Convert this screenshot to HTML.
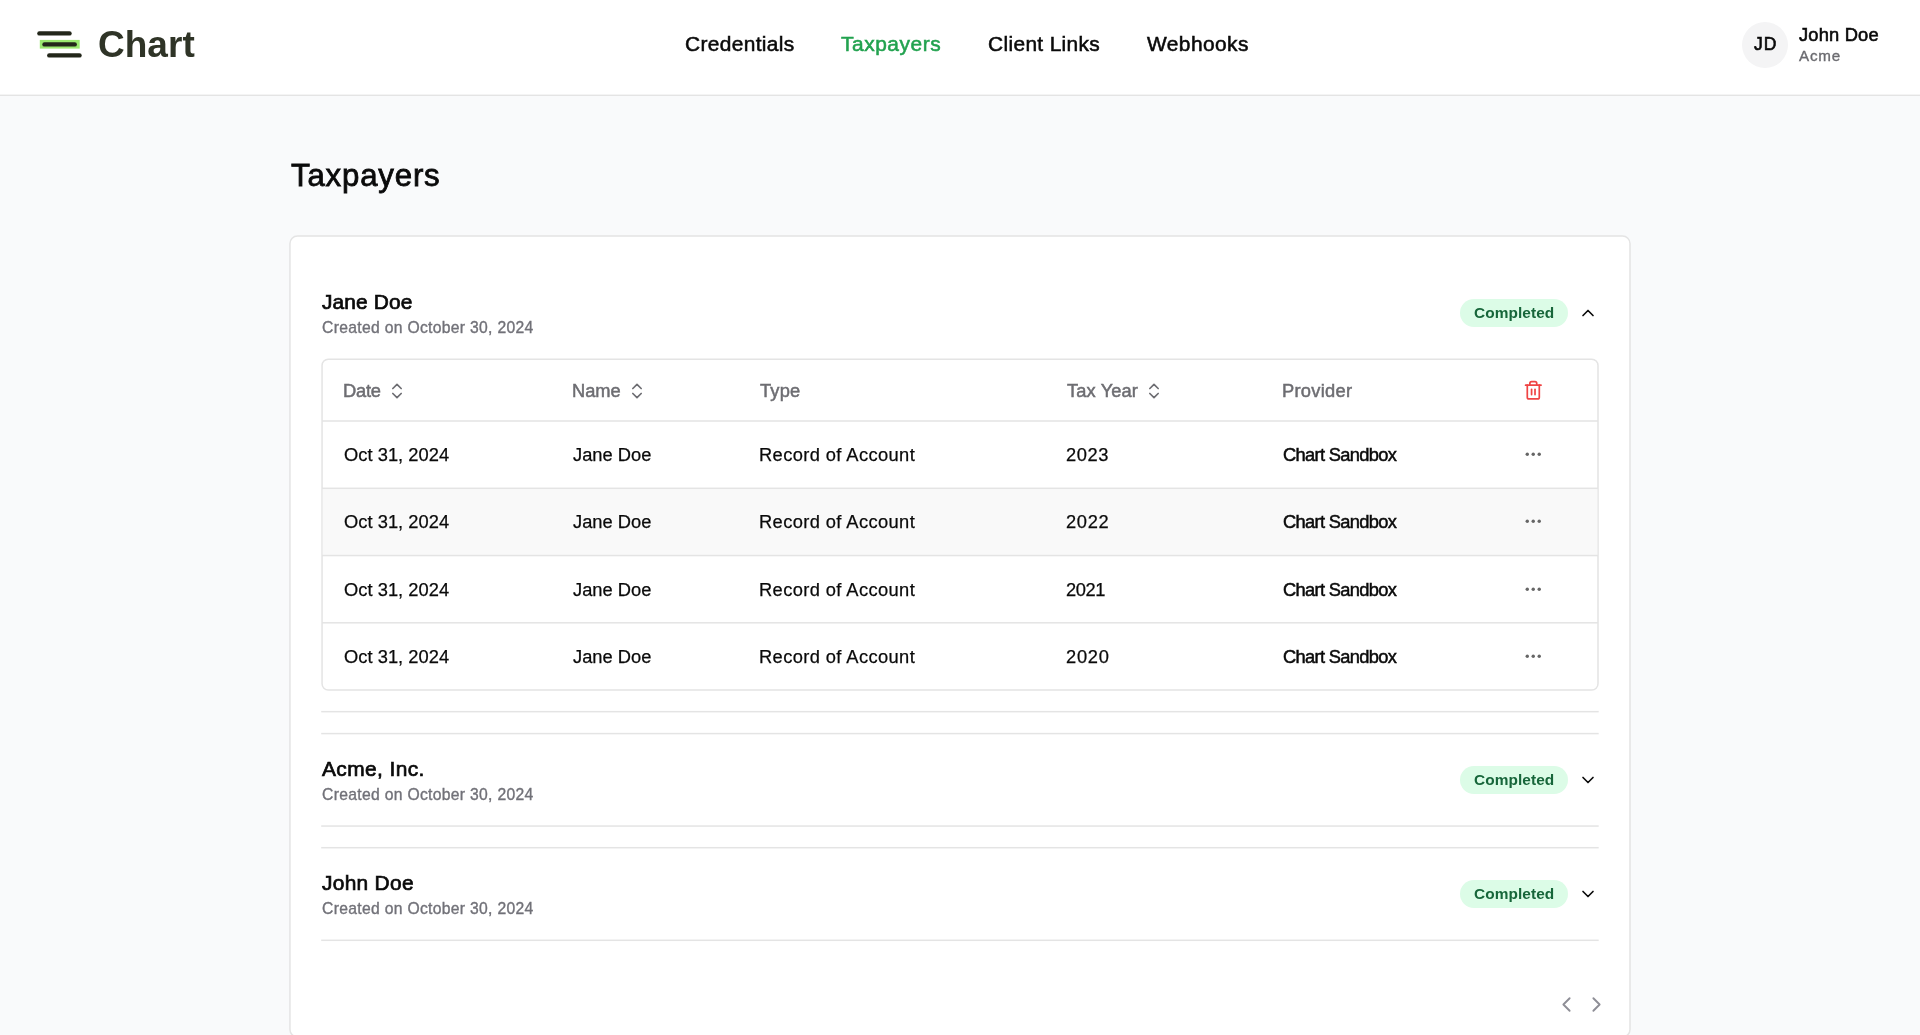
<!DOCTYPE html>
<html lang="en">
<head>
<meta charset="utf-8">
<title>Taxpayers</title>
<style>
*{box-sizing:border-box;margin:0;padding:0}
html,body{width:1920px;height:1035px;overflow:hidden}
body{font-family:"Liberation Sans",sans-serif;background:#f9fafb;color:#0a0a0a;position:relative}
.app{position:absolute;left:0;top:0;width:1920px;height:1035px}
.t{position:absolute;white-space:nowrap;line-height:normal;will-change:transform;font-weight:400;color:#0a0a0a}
header{position:absolute;left:0;top:0;width:1920px;height:96px;background:#fff}
.brand{font-weight:700;color:#2f3427}
.nav{text-decoration:none;-webkit-text-stroke:.55px currentColor}
.nav.on{color:#22a24f}
.avatar{position:absolute;left:1741.8px;top:21.5px;width:46px;height:46px;border-radius:50%;background:#f4f4f5}
.jd,.uname{-webkit-text-stroke:.6px currentColor}
.h1{-webkit-text-stroke:.8px currentColor}
.uorg{color:#6b6b70;-webkit-text-stroke:.35px currentColor}
.name{-webkit-text-stroke:.7px currentColor}
.sub{color:#717178;-webkit-text-stroke:.35px currentColor}
.badge{position:absolute;left:1459.8px;width:108.5px;height:28px;border-radius:14px;background:#dcfce7}
.badge-t{font-weight:700;color:#17663a}
.td{-webkit-text-stroke:.25px currentColor}
.th{color:#6d6d72;-webkit-text-stroke:.5px currentColor}
.prov{-webkit-text-stroke:.5px currentColor}
svg{position:absolute;overflow:visible}
.ic{fill:none;stroke-width:2;stroke-linecap:round;stroke-linejoin:round}
</style>
</head>
<body>
<div class="app">
<header>
 <svg width="100" height="96" viewBox="0 0 100 96" style="left:0;top:0"><rect x="39.8" y="39.9" width="39.9" height="8.7" fill="#9be870"/><rect x="37.2" y="31.2" width="34.5" height="4.4" rx="2.2" fill="#23271a"/><rect x="42.3" y="42.2" width="34.6" height="4.4" rx="2.2" fill="#23271a"/><rect x="47.1" y="53.2" width="34.6" height="4.4" rx="2.2" fill="#23271a"/></svg>
 <div class="t brand" style="left:97.60px;top:24px;font-size:37.0px;letter-spacing:0.026px">Chart</div>
 <nav>
  <a class="t nav" style="left:685.07px;top:32px;font-size:20.9px;letter-spacing:0.363px">Credentials</a>
  <a class="t nav on" style="left:841.38px;top:32px;font-size:20.9px;letter-spacing:0.548px">Taxpayers</a>
  <a class="t nav" style="left:987.77px;top:32px;font-size:20.9px;letter-spacing:0.347px">Client Links</a>
  <a class="t nav" style="left:1146.53px;top:32px;font-size:20.9px;letter-spacing:0.446px">Webhooks</a>
 </nav>
 <div class="avatar"></div>
 <div class="t jd" style="left:1754.20px;top:34px;font-size:17.5px;letter-spacing:0.950px">JD</div>
 <div class="t uname" style="left:1799.10px;top:24px;font-size:18.3px;letter-spacing:0.187px">John Doe</div>
 <div class="t uorg" style="left:1798.97px;top:47px;font-size:15.2px;letter-spacing:0.758px">Acme</div>
</header>
<h1 class="t h1" style="left:290.90px;top:158px;font-size:31.2px;letter-spacing:0.819px">Taxpayers</h1>
<svg class="lines" width="1920" height="1035" viewBox="0 0 1920 1035" style="left:0;top:0">
<rect x="0" y="94.6" width="1920" height="1.4" fill="#e4e4e4"/>
<rect x="289.95" y="236.0" width="1340.05" height="801" rx="7.5" fill="#fff" stroke="#e4e4e4" stroke-width="1.5"/>
<rect x="322.05" y="359.25" width="1275.95" height="330.85" rx="6.25" fill="#fff" stroke="#e4e4e4" stroke-width="1.5"/>
<rect x="322.7" y="488.9" width="1274.65" height="66.1" fill="#f9f9f9"/>
<rect x="322.05" y="420.250" width="1275.95" height="1.5" fill="#e4e4e4"/>
<rect x="322.05" y="487.550" width="1275.95" height="1.5" fill="#e4e4e4"/>
<rect x="322.05" y="554.800" width="1275.95" height="1.5" fill="#e4e4e4"/>
<rect x="322.05" y="622.050" width="1275.95" height="1.5" fill="#e4e4e4"/>
<rect x="321.2" y="710.900" width="1277.50" height="1.5" fill="#e4e4e4"/>
<rect x="321.2" y="732.850" width="1277.50" height="1.5" fill="#e4e4e4"/>
<rect x="321.2" y="825.300" width="1277.50" height="1.5" fill="#e4e4e4"/>
<rect x="321.2" y="846.950" width="1277.50" height="1.5" fill="#e4e4e4"/>
<rect x="321.2" y="939.550" width="1277.50" height="1.5" fill="#e4e4e4"/>
</svg>
<!-- taxpayer 1 -->
<div class="t name" style="left:322.25px;top:290px;font-size:20.9px;letter-spacing:0.120px">Jane Doe</div>
<div class="t sub" style="left:322.07px;top:319px;font-size:15.7px;letter-spacing:0.309px">Created on October 30, 2024</div>
<div class="badge" style="top:298.70px"></div>
<div class="t badge-t" style="left:1474.20px;top:304px;font-size:15.4px;letter-spacing:0.085px">Completed</div>
<svg class="ic" style="left:1578.45px;top:303.30px" width="20" height="20" viewBox="0 0 24 24" stroke="#0a0a0a"><path d="m18 15-6-6-6 6"/></svg>
<div class="t th" style="left:343.21px;top:380px;font-size:18.3px;letter-spacing:-0.219px">Date</div>
<div class="t th" style="left:572.05px;top:380px;font-size:18.3px;letter-spacing:0.001px">Name</div>
<div class="t th" style="left:760.25px;top:380px;font-size:18.3px;letter-spacing:0.211px">Type</div>
<div class="t th" style="left:1066.55px;top:380px;font-size:18.3px;letter-spacing:0.118px">Tax Year</div>
<div class="t th" style="left:1282.25px;top:380px;font-size:18.3px;letter-spacing:0.288px">Provider</div>
<svg class="ic" style="left:387.10px;top:380.70px" width="20" height="20" viewBox="0 0 24 24" stroke="#6d6d72"><path d="m7 15 5 5 5-5"/><path d="m7 9 5-5 5 5"/></svg>
<svg class="ic" style="left:626.70px;top:380.70px" width="20" height="20" viewBox="0 0 24 24" stroke="#6d6d72"><path d="m7 15 5 5 5-5"/><path d="m7 9 5-5 5 5"/></svg>
<svg class="ic" style="left:1143.90px;top:380.70px" width="20" height="20" viewBox="0 0 24 24" stroke="#6d6d72"><path d="m7 15 5 5 5-5"/><path d="m7 9 5-5 5 5"/></svg>
<svg class="ic" style="left:1523.1px;top:380.1px" width="20.6" height="20.6" viewBox="0 0 24 24" stroke="#ef4444"><path d="M3 6h18"/><path d="M19 6v14c0 1-1 2-2 2H7c-1 0-2-1-2-2V6"/><path d="M8 6V4c0-1 1-2 2-2h4c1 0 2 1 2 2v2"/><path d="M10 11v6"/><path d="M14 11v6"/></svg>
<div class="t td" style="left:343.73px;top:444px;font-size:18.3px;letter-spacing:0.040px">Oct 31, 2024</div>
<div class="t td" style="left:572.62px;top:444px;font-size:18.3px;letter-spacing:0.008px">Jane Doe</div>
<div class="t td" style="left:759.02px;top:444px;font-size:18.3px;letter-spacing:0.396px">Record of Account</div>
<div class="t td" style="left:1066.33px;top:444px;font-size:18.3px;letter-spacing:0.550px">2023</div>
<div class="t td prov" style="left:1283.15px;top:444px;font-size:18.3px;letter-spacing:-0.676px">Chart Sandbox</div>
<svg style="left:1523.30px;top:444.05px" width="20.5" height="20.5" viewBox="0 0 24 24" fill="#666"><circle cx="5" cy="12" r="2"/><circle cx="12" cy="12" r="2"/><circle cx="19" cy="12" r="2"/></svg>
<div class="t td" style="left:343.73px;top:511px;font-size:18.3px;letter-spacing:0.040px">Oct 31, 2024</div>
<div class="t td" style="left:572.62px;top:511px;font-size:18.3px;letter-spacing:0.008px">Jane Doe</div>
<div class="t td" style="left:759.02px;top:511px;font-size:18.3px;letter-spacing:0.396px">Record of Account</div>
<div class="t td" style="left:1066.33px;top:511px;font-size:18.3px;letter-spacing:0.650px">2022</div>
<div class="t td prov" style="left:1283.15px;top:511px;font-size:18.3px;letter-spacing:-0.676px">Chart Sandbox</div>
<svg style="left:1523.30px;top:511.30px" width="20.5" height="20.5" viewBox="0 0 24 24" fill="#666"><circle cx="5" cy="12" r="2"/><circle cx="12" cy="12" r="2"/><circle cx="19" cy="12" r="2"/></svg>
<div class="t td" style="left:343.73px;top:579px;font-size:18.3px;letter-spacing:0.040px">Oct 31, 2024</div>
<div class="t td" style="left:572.62px;top:579px;font-size:18.3px;letter-spacing:0.008px">Jane Doe</div>
<div class="t td" style="left:759.02px;top:579px;font-size:18.3px;letter-spacing:0.396px">Record of Account</div>
<div class="t td" style="left:1066.33px;top:579px;font-size:18.3px;letter-spacing:-0.384px">2021</div>
<div class="t td prov" style="left:1283.15px;top:579px;font-size:18.3px;letter-spacing:-0.676px">Chart Sandbox</div>
<svg style="left:1523.30px;top:578.60px" width="20.5" height="20.5" viewBox="0 0 24 24" fill="#666"><circle cx="5" cy="12" r="2"/><circle cx="12" cy="12" r="2"/><circle cx="19" cy="12" r="2"/></svg>
<div class="t td" style="left:343.73px;top:646px;font-size:18.3px;letter-spacing:0.040px">Oct 31, 2024</div>
<div class="t td" style="left:572.62px;top:646px;font-size:18.3px;letter-spacing:0.008px">Jane Doe</div>
<div class="t td" style="left:759.02px;top:646px;font-size:18.3px;letter-spacing:0.396px">Record of Account</div>
<div class="t td" style="left:1066.33px;top:646px;font-size:18.3px;letter-spacing:0.750px">2020</div>
<div class="t td prov" style="left:1283.15px;top:646px;font-size:18.3px;letter-spacing:-0.676px">Chart Sandbox</div>
<svg style="left:1523.30px;top:645.85px" width="20.5" height="20.5" viewBox="0 0 24 24" fill="#666"><circle cx="5" cy="12" r="2"/><circle cx="12" cy="12" r="2"/><circle cx="19" cy="12" r="2"/></svg>
<!-- taxpayer 2 -->
<div class="t name" style="left:322.25px;top:757px;font-size:20.9px;letter-spacing:0.403px">Acme, Inc.</div>
<div class="t sub" style="left:322.07px;top:786px;font-size:15.7px;letter-spacing:0.309px">Created on October 30, 2024</div>
<div class="badge" style="top:765.80px"></div>
<div class="t badge-t" style="left:1474.20px;top:771px;font-size:15.4px;letter-spacing:0.085px">Completed</div>
<svg class="ic" style="left:1578.45px;top:769.50px" width="20" height="20" viewBox="0 0 24 24" stroke="#0a0a0a"><path d="m6 9 6 6 6-6"/></svg>
<!-- taxpayer 3 -->
<div class="t name" style="left:322.25px;top:871px;font-size:20.9px;letter-spacing:0.299px">John Doe</div>
<div class="t sub" style="left:322.07px;top:900px;font-size:15.7px;letter-spacing:0.309px">Created on October 30, 2024</div>
<div class="badge" style="top:879.90px"></div>
<div class="t badge-t" style="left:1474.20px;top:885px;font-size:15.4px;letter-spacing:0.085px">Completed</div>
<svg class="ic" style="left:1578.45px;top:883.60px" width="20" height="20" viewBox="0 0 24 24" stroke="#0a0a0a"><path d="m6 9 6 6 6-6"/></svg>
<!-- pagination -->
<svg class="ic" style="left:1553.5px;top:992px;stroke-width:1.8" width="25" height="25" viewBox="0 0 24 24" stroke="#8e8e96"><path d="m15 18-6-6 6-6"/></svg>
<svg class="ic" style="left:1583.6px;top:992px;stroke-width:1.8" width="25" height="25" viewBox="0 0 24 24" stroke="#8e8e96"><path d="m9 18 6-6-6-6"/></svg>
</div>
</body>
</html>
